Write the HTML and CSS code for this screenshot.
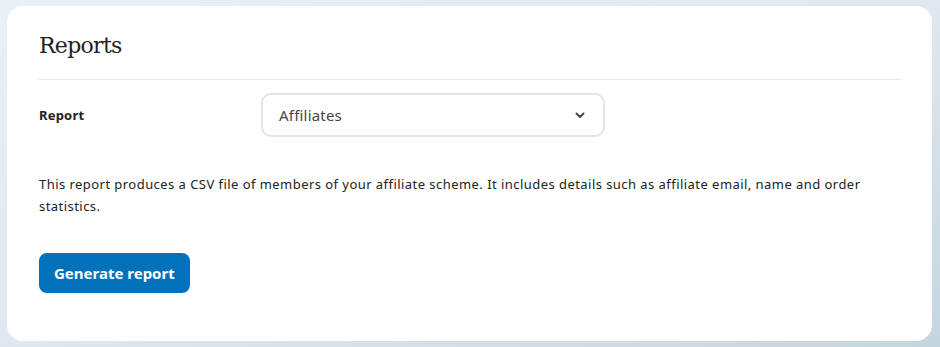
FILE: index.html
```html
<!DOCTYPE html>
<html>
<head>
<meta charset="utf-8">
<link rel="stylesheet" href="styles.css">
</head>
<body>
<div class="page">
  <div class="card">
    <h1 class="title">Reports</h1>
    <div class="divider"></div>
    <div class="field">
      <label class="label">Report</label>
      <div class="select">
        <span class="select-value">Affiliates</span>
        <svg class="chevron" width="10" height="7" viewBox="0 0 10 7"><path d="M1.5 1.5 L5 5 L8.5 1.5" fill="none" stroke="#444" stroke-width="2" stroke-linecap="round" stroke-linejoin="round"/></svg>
      </div>
    </div>
    <p class="desc">This report produces a CSV file of members of your affiliate scheme. It includes details such as affiliate email, name and order statistics.</p>
    <button class="btn">Generate report</button>
  </div>
</div>
</body>
</html>
```
FILE: styles.css
```css
html, body { margin: 0; padding: 0; }
body {
  width: 940px;
  height: 347px;
  overflow: hidden;
  background: linear-gradient(160deg, #e9f0f6 0%, #dfe8f0 50%, #c5d5df 100%);
  font-family: "Noto Sans", "Open Sans", sans-serif;
  color: #222;
}
.page {
  padding: 6px 8px 6px 7px;
  box-sizing: border-box;
  height: 347px;
}
.card {
  background: #fff;
  border-radius: 16px;
  height: 335px;
  box-sizing: border-box;
  padding: 26px 31px 0 32px;
}
.title {
  margin: 0;
  font-family: "DejaVu Serif", "Liberation Serif", serif;
  font-weight: 400;
  font-size: 22px;
  line-height: 28px;
  color: #222;
  letter-spacing: -0.7px;
}
.divider {
  height: 1px;
  background: #e6e6e6;
  margin-top: 19px;
}
.field {
  display: grid;
  grid-template-columns: 222px 344px;
  align-items: center;
  margin-top: 13px;
}
.label {
  font-size: 13px;
  font-weight: 700;
  color: #222;
  letter-spacing: 0.2px;
}
.select {
  height: 44px;
  box-sizing: border-box;
  border: 2px solid #e4e4e4;
  border-radius: 10px;
  display: flex;
  align-items: center;
  justify-content: space-between;
  padding: 0 18px 0 16px;
}
.select-value {
  font-size: 15px;
  color: #444;
  letter-spacing: 0.2px;
}
.desc {
  margin: 36px 0 0;
  font-size: 13px;
  line-height: 22px;
  color: #222;
  letter-spacing: 0.45px;
}
.btn {
  display: block;
  margin-top: 36px;
  height: 40px;
  padding: 0 15px;
  border: none;
  border-radius: 8px;
  background: #0072bc;
  color: #fff;
  font-family: "Noto Sans", sans-serif;
  font-weight: 700;
  font-size: 15px;
  letter-spacing: 0;
}
```
